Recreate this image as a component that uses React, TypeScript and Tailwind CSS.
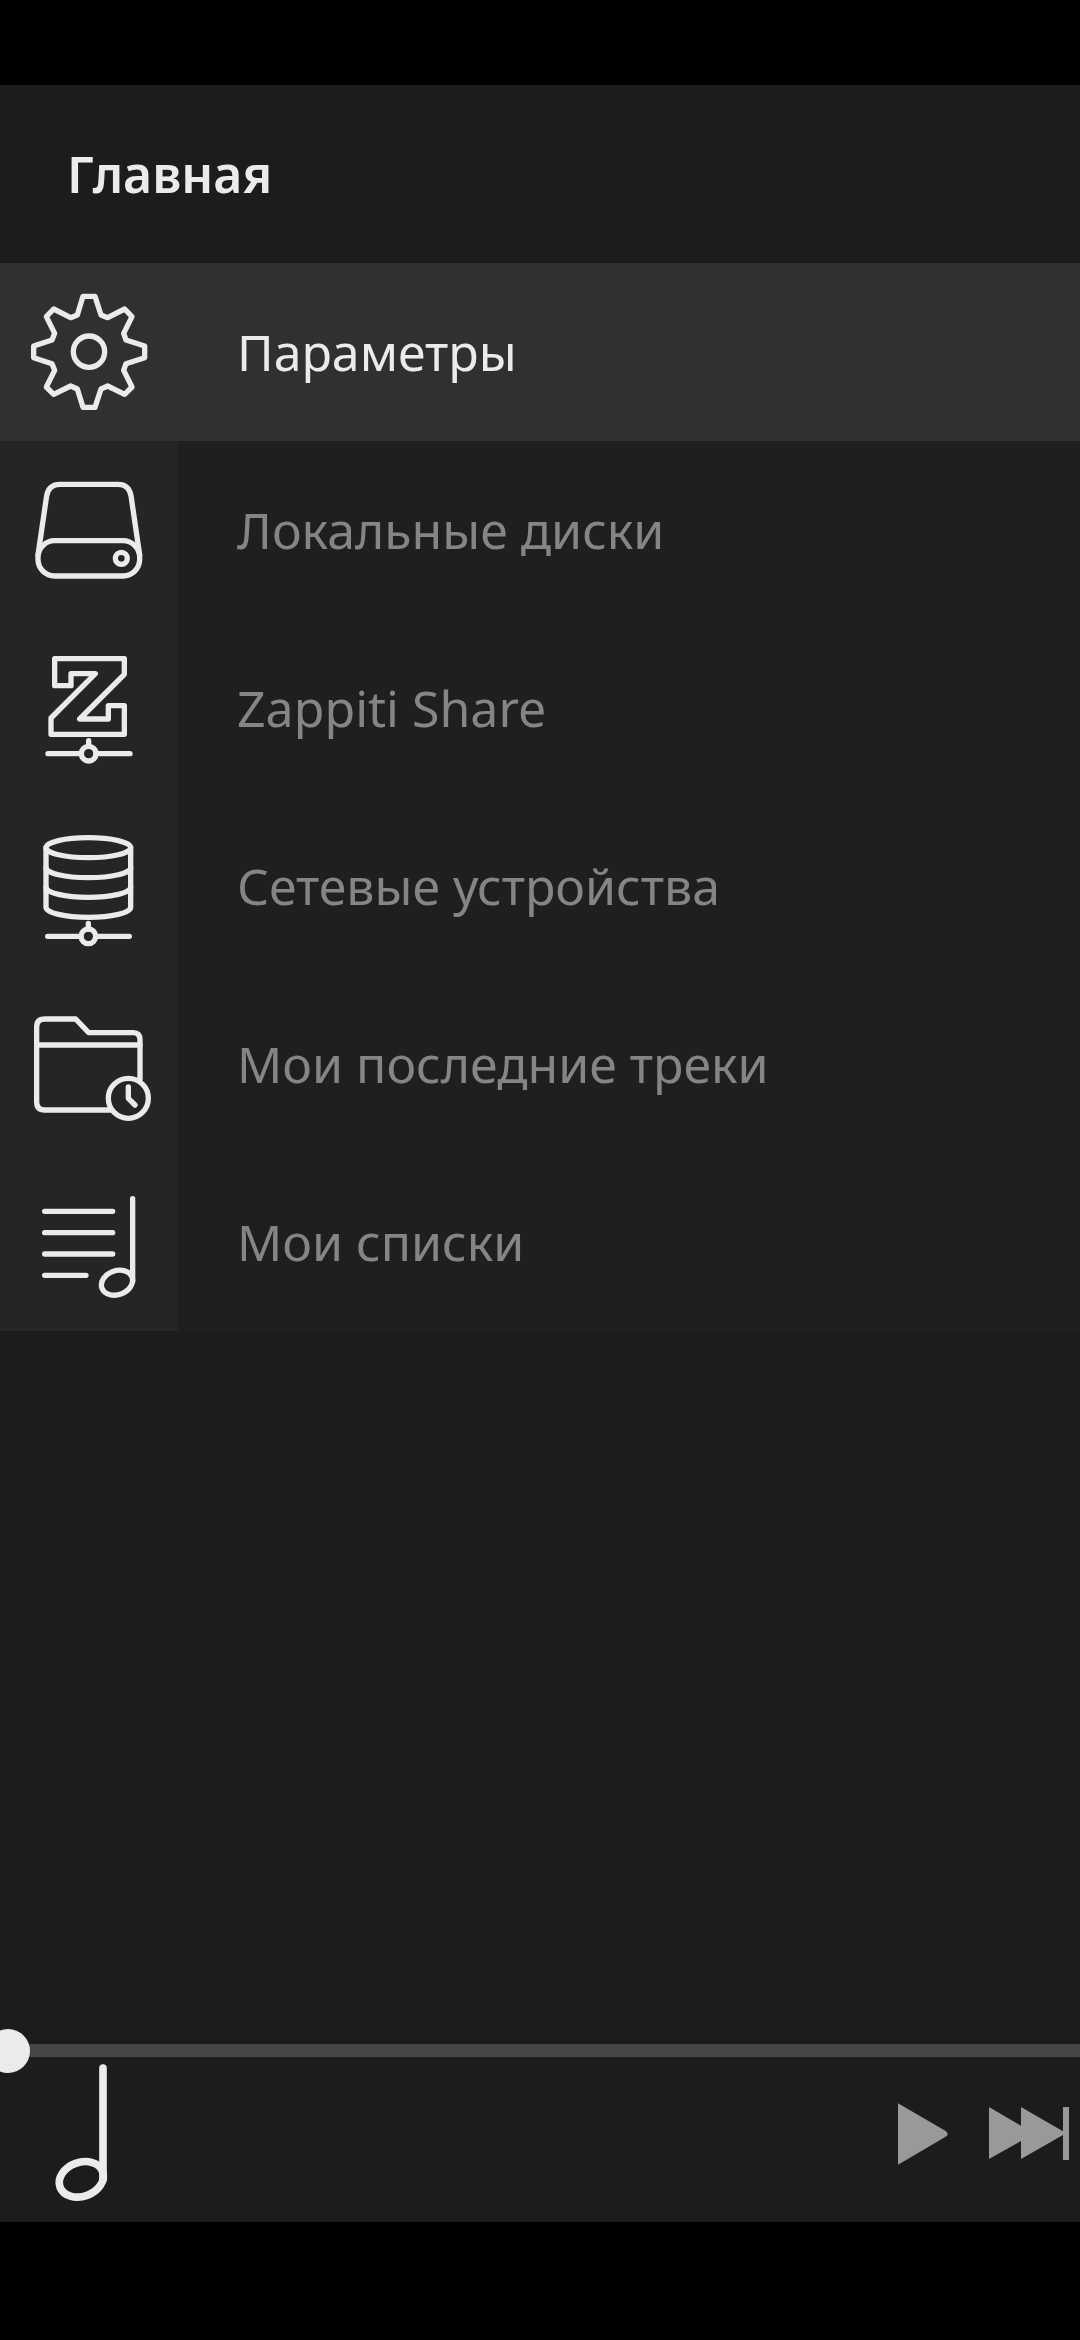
import React, { useState } from 'react';

interface MenuItem {
  id: string;
  label: string;
  icon: React.ReactNode;
}

interface IconProps {
  viewBox: string;
  children: React.ReactNode;
}

const MenuIcon: React.FC<IconProps> = ({ viewBox, children }) => (
  <svg
    viewBox={viewBox}
    className="h-full w-full"
    fill="none"
    stroke="currentColor"
    strokeWidth="16"
    strokeLinecap="round"
    strokeLinejoin="round"
    aria-hidden="true"
  >
    {children}
  </svg>
);

const SettingsIcon = () => (
  <MenuIcon viewBox="0 9 534 534">
    <path d="M249 109H285L303 165L323 173L374 147L396 170L371 220L378 240L434 258V293L378 311L371 331L396 381L374 403L323 378L303 387L285 442H249L232 387L212 378L161 403L139 381L164 331L156 311L101 293V258L156 240L164 220L139 170L161 147L212 173L232 165Z" />
    <circle cx="267" cy="275" r="47" />
  </MenuIcon>
);

const DriveIcon = () => (
  <MenuIcon viewBox="0 3 534 534">
    <path d="M114 345L140 167Q146 133 180 133H354Q387 133 393 167L419 345" />
    <rect x="114" y="302" width="305" height="106" rx="50" />
    <circle cx="364" cy="355" r="18" />
  </MenuIcon>
);

const ShareIcon = () => (
  <MenuIcon viewBox="0 -3 534 534">
    <path d="M164 116H373V163L239 297H325V257H373V343H153V294L286 161H213V197H164Z" />
    <path d="M144 401H244M288 401H390M266 362V379" />
    <circle cx="266" cy="401" r="22" />
  </MenuIcon>
);

const NetworkIcon = () => (
  <MenuIcon viewBox="0 -9 534 534">
    <ellipse cx="265" cy="143" rx="127" ry="30" />
    <path d="M138 143V322A127 30 0 0 0 392 322V143" />
    <path d="M138 203A127 30 0 0 0 392 203M138 262A127 30 0 0 0 392 262" />
    <path d="M143 409H243M287 409H388M265 370V387" />
    <circle cx="265" cy="409" r="22" />
  </MenuIcon>
);

const RecentIcon = () => (
  <MenuIcon viewBox="0 -15 534 534">
    <path d="M330 390H134Q110 390 110 366V141Q110 117 134 117H227L266 158H400Q420 158 420 180V298" />
    <path d="M110 195H420" />
    <circle cx="385" cy="355" r="60" />
    <path d="M385 321V355L405 375" />
  </MenuIcon>
);

const PlaylistIcon = () => (
  <MenuIcon viewBox="0 -21 534 534">
    <path d="M134 154H338M134 218H338M134 282H338M134 346H258M398 116V364" />
    <ellipse cx="351" cy="368" rx="48" ry="36" transform="rotate(-20 351 368)" />
  </MenuIcon>
);

const items: MenuItem[] = [
  { id: 'settings', label: 'Параметры', icon: <SettingsIcon /> },
  { id: 'local', label: 'Локальные диски', icon: <DriveIcon /> },
  { id: 'share', label: 'Zappiti Share', icon: <ShareIcon /> },
  { id: 'network', label: 'Сетевые устройства', icon: <NetworkIcon /> },
  { id: 'recent', label: 'Мои последние треки', icon: <RecentIcon /> },
  { id: 'playlists', label: 'Мои списки', icon: <PlaylistIcon /> },
];

const App: React.FC = () => {
  const [selected, setSelected] = useState('settings');
  const [position, setPosition] = useState(0);

  return (
    <div className="flex min-h-screen flex-col overflow-x-hidden bg-black pt-[85px] pb-[118px] font-['Noto_Sans',sans-serif] text-[50px] leading-[60px] text-[#ebebeb]">
      <main className="flex flex-1 flex-col bg-[#1c1c1c]">
        <header className="flex h-[178px] items-center px-[67px]">
          <h1 className="font-semibold">Главная</h1>
        </header>

        <nav>
          {items.map((item) => (
            <button
              key={item.id}
              type="button"
              onClick={() => setSelected(item.id)}
              className={`flex h-[178px] w-full items-center text-left ${
                selected === item.id ? 'bg-[#303030]' : 'bg-[#1f1f1f]'
              }`}
            >
              <span className={`size-[178px] shrink-0 ${selected === item.id ? '' : 'bg-[#252525]'}`}>
                {item.icon}
              </span>
              <span className={`pl-[59px] ${selected === item.id ? '' : 'text-[#858585]'}`}>{item.label}</span>
            </button>
          ))}
        </nav>

        <footer className="mt-auto">
          {/* The track runs edge to edge, the thumb starts partly off screen */}
          <input
            type="range"
            min={0}
            max={100}
            value={position}
            onChange={(e) => setPosition(Number(e.target.value))}
            aria-label="Позиция"
            className="-ml-[14px] block h-[13px] w-[calc(100%+28px)] appearance-none bg-[#464646] [&::-webkit-slider-thumb]:size-[44px] [&::-webkit-slider-thumb]:appearance-none [&::-webkit-slider-thumb]:rounded-full [&::-webkit-slider-thumb]:bg-[#ebebeb]"
          />
          <div className="flex h-[165px] items-center justify-between">
            <button type="button" aria-label="Текущий трек" className="h-[165px] w-[178px]">
              <svg
                viewBox="0 171 534 495"
                className="h-full w-full"
                fill="none"
                stroke="currentColor"
                strokeWidth="23"
                strokeLinecap="round"
              >
                <path d="M309 204V538" />
                <ellipse cx="244" cy="538" rx="68" ry="51" transform="rotate(-20 244 538)" />
              </svg>
            </button>
            <div className="flex items-center gap-[41px] pr-[11px] pb-3 text-[#999999]">
              <button type="button" aria-label="Воспроизвести">
                <svg viewBox="0 0 150 186" className="h-[62px] w-[50px]" fill="currentColor">
                  <path d="M0 1L143 84Q155 93 143 101L0 185Z" />
                </svg>
              </button>
              <button type="button" aria-label="Следующий">
                <svg viewBox="0 0 240 159" className="h-[53px] w-[80px]" fill="currentColor">
                  <path d="M0 0L96 56V0L222 73V0H240V159H222V84L96 156V102L0 156Z" />
                </svg>
              </button>
            </div>
          </div>
        </footer>
      </main>
    </div>
  );
};

export default App;
